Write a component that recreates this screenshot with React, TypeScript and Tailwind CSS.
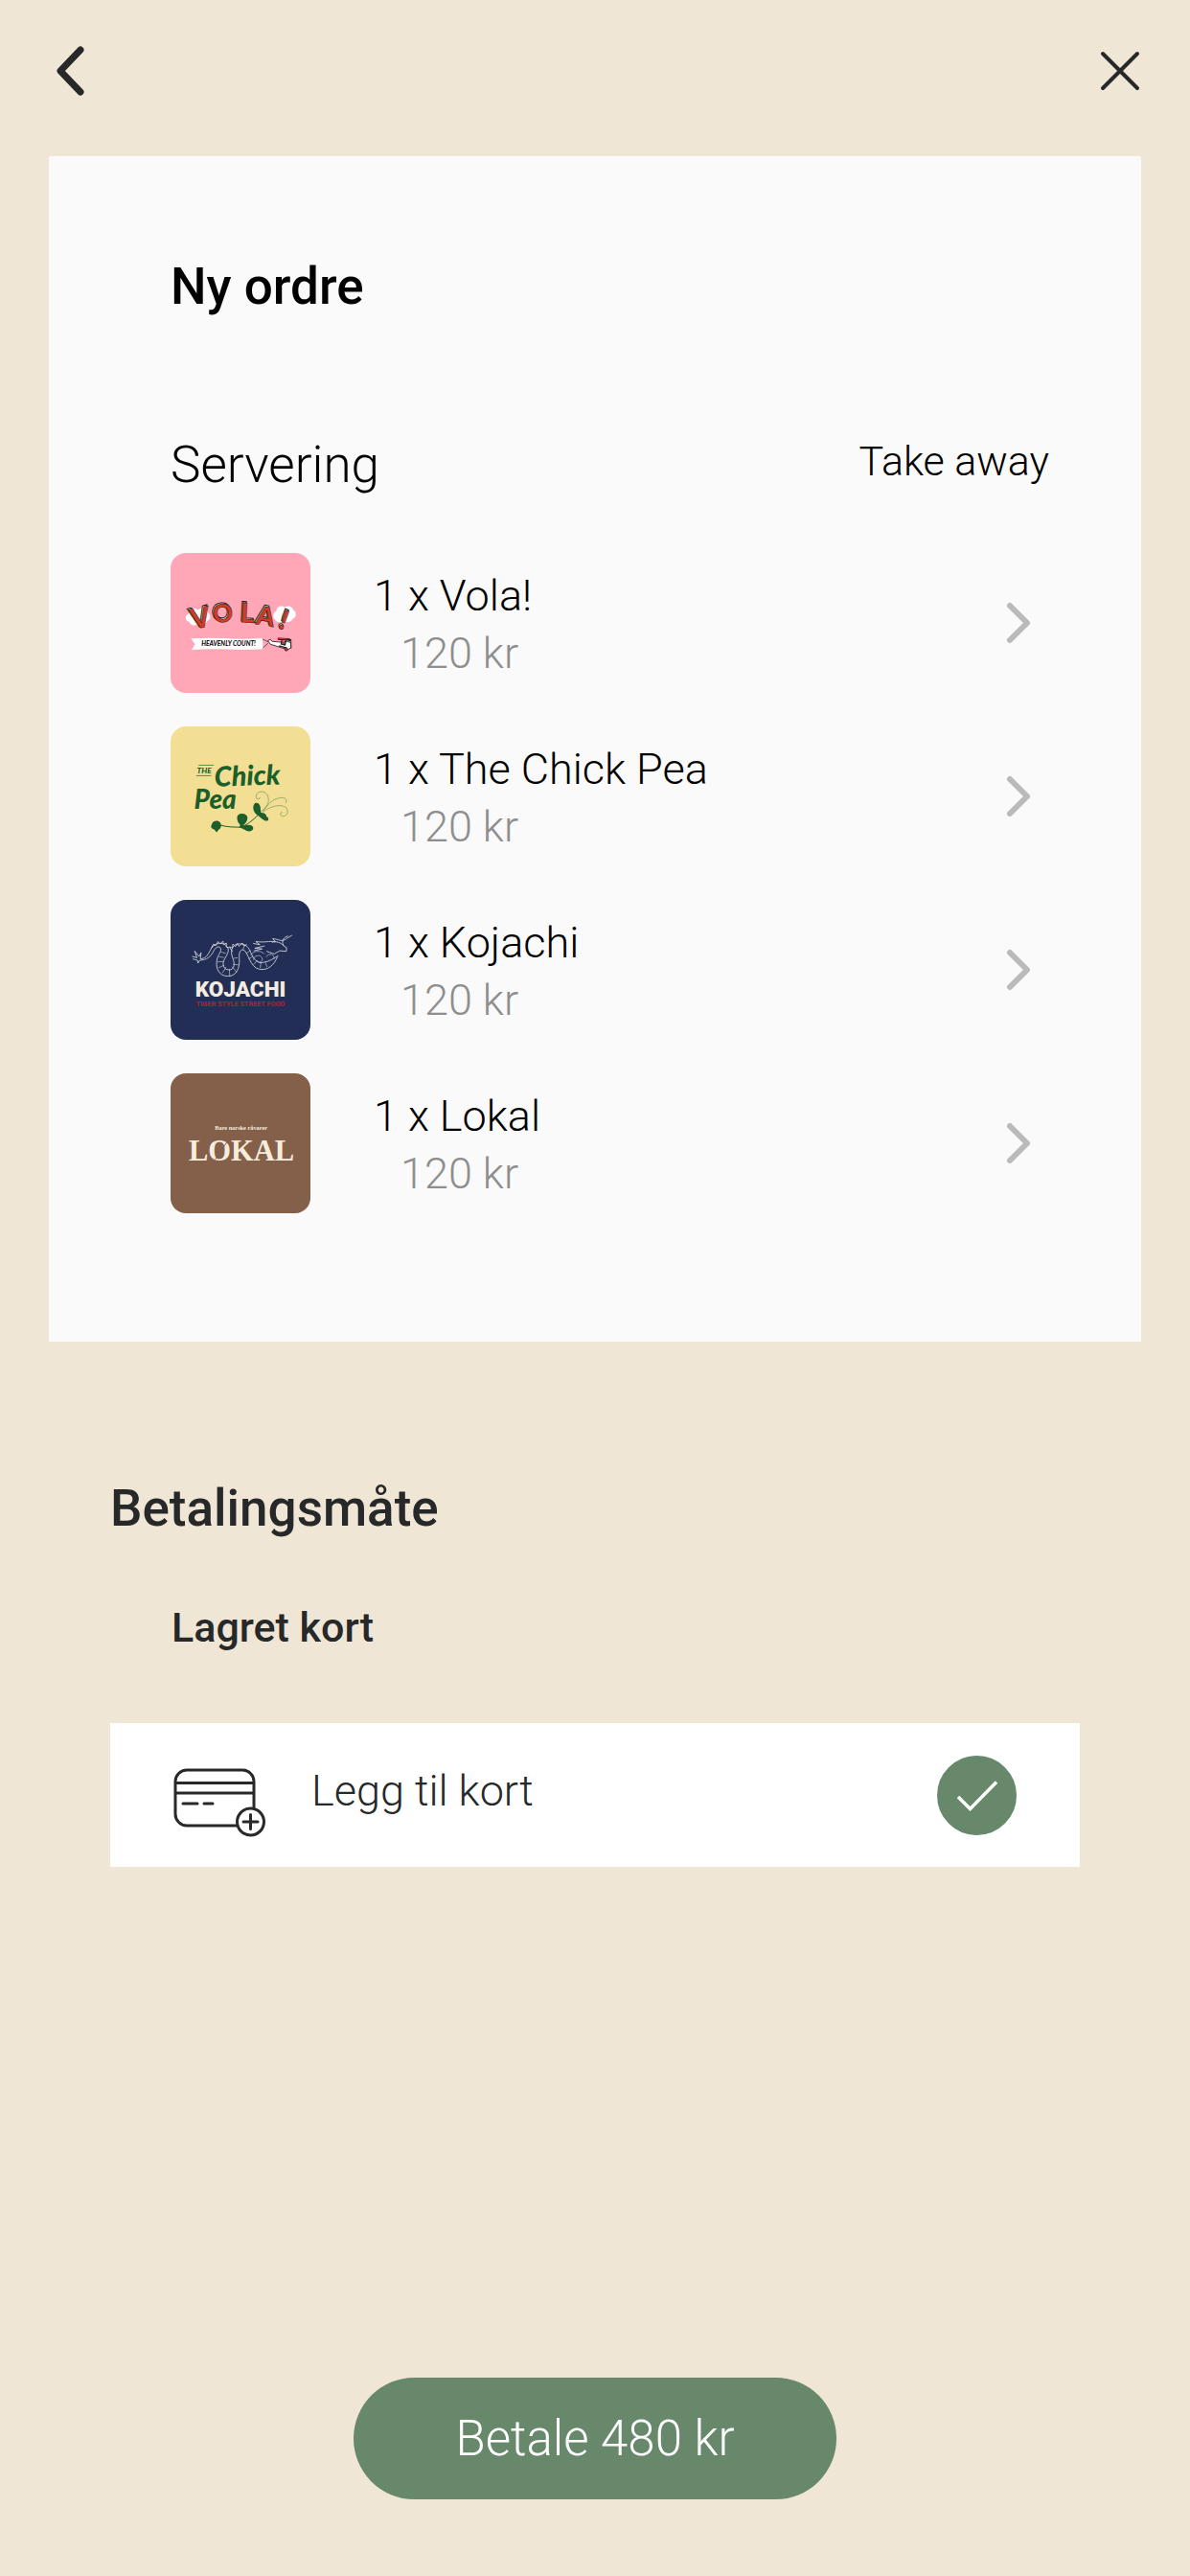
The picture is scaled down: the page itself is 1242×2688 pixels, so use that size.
import { useState } from 'react';
import type { ReactNode } from 'react';

type OrderItem = {
  id: string;
  name: string;
  count: number;
  price: number;
  logo: ReactNode;
};

function VolaLogo() {
  const letters = [
    { char: 'V', x: 95, y: 260, rotate: -12, size: 88 },
    { char: 'O', x: 160, y: 239, rotate: -5, size: 78 },
    { char: 'L', x: 243, y: 237, rotate: 3, size: 86 },
    { char: 'A', x: 291, y: 242, rotate: 10, size: 82 },
    { char: '!', x: 360, y: 254, rotate: 20, size: 84 },
  ];

  return (
    <svg viewBox="25 19 440 440" className="size-full bg-[#ffa7b7]" aria-hidden="true">
      {/* clouds */}
      <path d="M84 236c-15-4-15-22-2-25 1-15 20-21 29-12 12-12 32-4 32 8 10 6 8 22-2 25-6 14-25 20-33 12-10 5-21 1-24-8z" fill="#fff" />
      <path d="M352 226c-8-8-3-22 6-24 0-14 16-20 26-12 10-8 26-2 27 9 12 4 11 24-2 27-4 10-18 13-25 6-10 8-27 6-32-6z" fill="#fff" />
      {letters.map(l => (
        <g key={l.char} transform={`translate(${l.x} ${l.y}) rotate(${l.rotate})`} fontFamily="Lato, sans-serif" fontWeight="900" fontSize={l.size}>
          <text x="-3" y="-4" fill="#e9e2e2" stroke="#1d1d1b" strokeWidth="3">{l.char}</text>
          <text fill="#d63a20" stroke="#1d1d1b" strokeWidth="1.5">{l.char}</text>
        </g>
      ))}
      {/* banner */}
      <path d="M89 288q60-3 112 0t113-1l2 34q-60 4-115 1t-110 2l11-18z" fill="#fff" />
      <text x="122" y="310" fontFamily="Lato, sans-serif" fontWeight="900" fontStyle="italic" fontSize="20" fill="#111">HEAVENLY COUNT!</text>
      {/* plane */}
      <path d="M315 290l17 9M315 318l17-15" stroke="#1d1d1b" strokeWidth="2" fill="none" />
      <path d="M331 295l8-4 5 6 33 3 14-3 12 4 1 16-10 6-20-6-35-11z" fill="#fff" stroke="#1d1d1b" strokeWidth="2.5" />
      <path d="M362 289l34 2 8 4" stroke="#1d1d1b" strokeWidth="7" fill="none" />
      <path d="M362 288l32 2" stroke="#c8322a" strokeWidth="3" fill="none" />
      <path d="M375 293l-2 12 12 3 3-14M366 311l24 7" stroke="#1d1d1b" strokeWidth="4" fill="none" />
      <circle cx="389" cy="322" r="5" fill="#c8322a" stroke="#1d1d1b" strokeWidth="2" />
      <circle cx="380" cy="302" r="4" fill="#c8322a" />
      <path d="M404 293v27" stroke="#1d1d1b" strokeWidth="2" />
    </svg>
  );
}

function ChickPeaLogo() {
  return (
    <svg viewBox="25 24 440 440" className="size-full bg-[#f2df94]" aria-hidden="true">
      <g fill="#1c5f2b" fontFamily="Lato, sans-serif" fontStyle="italic" fontWeight="900">
        <text x="108" y="172" fontSize="25">THE</text>
        <g transform="rotate(-2 170 214)">
          <text x="164" y="213" fontSize="87">Chick</text>
        </g>
        <text x="99" y="284" fontSize="84">Pea</text>
      </g>
      <path d="M113 146h48M106 179h47" stroke="#1c5f2b" strokeWidth="2" fill="none" />
      {/* pea branch */}
      <g fill="none" stroke="#1c5f2b" strokeWidth="3" strokeLinecap="round">
        <path d="M180 334c25 8 45 6 66 7 18-6 38-22 54-38" />
        <path d="M304 296c22-15 33-30 28-50-5-22-36-22-38-3-1 12 12 12 12 5M316 290c20-30 40-42 62-42 10 2 14 8 10 16M316 292c25-18 58-26 73-12 10 14 0 29-13 26-8-3-6-12 0-12" strokeWidth="1.2" />
      </g>
      <g fill="#1c5f2b">
        <path d="M156 329c3-8 18-12 25-3 5 8 4 18-4 22l-7 9-8-9c-8-1-11-9-9-12z" />
        <path d="M244 334c-9-8-13-24-6-32 10-8 28-3 29 9 0 11-7 20-15 25 14-3 30-4 33 6 1 10-11 15-22 10-7-4-12-8-22-10z" />
        <path d="M297 302c-13-10-16-28-6-37 11-4 18 8 17 20l1 10c11 0 17 4 18 12 7 3 8 12 2 14-10 2-19-10-32-19z" />
      </g>
    </svg>
  );
}

function KojachiLogo() {
  return (
    <svg viewBox="25 28 440 440" className="size-full bg-[#222e55]" aria-hidden="true">
      {/* dragon */}
      <g fill="none" stroke="#d9dbe0" strokeWidth="2.5" strokeLinecap="round" strokeLinejoin="round">
        <path d="M94 206l14 4-7-21 14 17 6-12-2 20c20-2 25-17 34-33 11-19 38-22 50-6 9 13-1 26-8 39-10 17-2 34 14 34 19 0 18-22 11-38-7-19-3-40 15-43 24-4 36 9 42 26 8 20 21 36 38 32 22-3 34-13 48-21" />
        <path d="M96 214l14 4 1 9 6-9c22-1 35-12 43-28 5-12 15-18 21-12 7 10-5 20-9 34-8 29 5 56 33 56 29 1 39-30 36-57-1-20 4-26 12-26 17 4 20 55 51 61 28 5 46-13 57-38" />
        <path d="M153 180l7-13 7 5 7-13 7 7 9-8 2 10 9-4-1 12 8 2M219 190l-9-14 10 3 1-12 8 8 6-10 5 9 11-10 5 9 8-4" />
        <path d="M286 165l20 4-13-10c28 4 42-2 62 0l-9-9c17 0 29 14 46-2l14-8M345 161c12-3 26 0 35 11l10 6-1 12-21-2-17 10-23-8M380 170c-7-13 0-24 13-28M288 188l25-6-23-2 30-7" />
        <path d="M286 216c0-14 22-18 27-5 5 12-12 19-16 8M278 201c8-16 34-14 42-3M326 207c9-14 26-9 25 6M184 192l14 4M178 207l14 2M173 223l17-1M177 241l16-7M189 257l10-17M211 267l-1-21M233 255l-14-16M239 232l-16-1M235 210l-12 2M253 184l5-13M263 196l13-8M272 213l12-7M287 231l8-10M307 241l2-14M328 238l-4-12" strokeWidth="1.8" />
      </g>
      <text x="245" y="332" textAnchor="middle" fontFamily="Roboto, sans-serif" fontWeight="900" fontSize="68" fill="#f4ece0">KOJACHI</text>
      <text x="245" y="363" textAnchor="middle" fontFamily="Roboto, sans-serif" fontWeight="700" fontSize="22" fill="#b02330">TIGER STYLE STREET FOOD</text>
    </svg>
  );
}

function LokalLogo() {
  return (
    <svg viewBox="25 27 440 440" className="size-full bg-[#84604a]" aria-hidden="true">
      <g fill="#f6ecdd" textAnchor="middle" fontFamily="'Liberation Serif', serif">
        <text x="247" y="206" fontSize="19" fontWeight="700">Bare norske råvarer</text>
        <text x="248" y="302" fontSize="92" fontWeight="700">LOKAL</text>
      </g>
      <path d="M166 297l38-56" stroke="#84604a" strokeWidth="3" />
    </svg>
  );
}

const items: OrderItem[] = [
  { id: 'vola', name: 'Vola!', count: 1, price: 120, logo: <VolaLogo /> },
  { id: 'chick-pea', name: 'The Chick Pea', count: 1, price: 120, logo: <ChickPeaLogo /> },
  { id: 'kojachi', name: 'Kojachi', count: 1, price: 120, logo: <KojachiLogo /> },
  { id: 'lokal', name: 'Lokal', count: 1, price: 120, logo: <LokalLogo /> },
];

export default function App() {
  const total = items.reduce((sum, item) => sum + item.count * item.price, 0);

  return (
    <div className="flex min-h-screen flex-col bg-[#f0e6d5] pb-20 font-['Roboto',sans-serif] text-[#262829]">
      <Header />
      <main className="flex flex-1 flex-col">
        <OrderCard />
        <Payment />
        <button type="button" className="mt-auto h-[127px] w-[504px] self-center rounded-full bg-[#67886b] text-[51px] leading-[60px] font-light text-white">
          Betale {total} kr
        </button>
      </main>
    </div>
  );
}

function Header() {
  return (
    <header className="mb-4 flex h-[147px] items-center justify-between pr-[50px] pl-[55px]">
      <button type="button" aria-label="Tilbake">
        <svg width="36" height="56" viewBox="0 0 36 56" fill="none" stroke="currentColor" strokeWidth="7" strokeLinecap="round" strokeLinejoin="round">
          <path d="M29 6L8 28l21 22" />
        </svg>
      </button>
      <button type="button" aria-label="Lukk">
        <svg width="46" height="46" viewBox="0 0 46 46" fill="none" stroke="currentColor" strokeWidth="4" strokeLinecap="round">
          <path d="M5 5l36 36M41 5L5 41" />
        </svg>
      </button>
    </header>
  );
}

function OrderCard() {
  return (
    <section className="mx-[51px] bg-[#fafafa] pt-[106px] pr-24 pb-[134px] pl-[127px] text-black">
      <h1 className="text-[53px] leading-[60px] font-medium">Ny ordre</h1>
      <div className="mt-[126px] flex items-start justify-between">
        <h2 className="text-[53px] leading-[60px] font-light">Servering</h2>
        <p className="text-[43px] leading-[52px] font-light">Take away</p>
      </div>
      <ul className="mt-[62px] flex flex-col gap-[35px]">
        {items.map(item => (
          <li key={item.id}>
            <button type="button" className="flex w-full items-center pr-[18px] text-left">
              <span className="size-[146px] shrink-0 overflow-hidden rounded-2xl">{item.logo}</span>
              <span className="ml-[66px] flex-1 pt-1 text-[45px] leading-[60px] font-light">
                <span className="block">
                  {item.count} x {item.name}
                </span>
                <span className="block pl-7 text-[#8e8e8e]">{item.price} kr</span>
              </span>
              <svg width="28" height="46" viewBox="0 0 28 46" fill="none" stroke="#bababa" strokeWidth="6" strokeLinecap="round" strokeLinejoin="round">
                <path d="M5 5l18 18L5 41" />
              </svg>
            </button>
          </li>
        ))}
      </ul>
    </section>
  );
}

function Payment() {
  const [selected, setSelected] = useState(true);

  return (
    <section className="mx-[115px] mt-36">
      <h2 className="text-[53px] leading-[60px] font-medium">Betalingsmåte</h2>
      <h3 className="mt-[68px] pl-16 text-[43px] leading-[52px] font-medium">Lagret kort</h3>
      <label className="mt-[74px] flex h-[150px] items-center bg-white px-[66px]">
        <CardIcon />
        <span className="ml-12 flex-1 pb-2 text-[45px] leading-[52px] font-light">Legg til kort</span>
        <span className="grid">
          <input type="checkbox" checked={selected} onChange={e => setSelected(e.target.checked)} className="peer col-start-1 row-start-1 size-[83px] appearance-none rounded-full border-2 border-[#67886b] checked:bg-[#67886b]" />
          <svg viewBox="0 0 83 83" fill="none" stroke="#fff" strokeWidth="3.5" className="pointer-events-none invisible col-start-1 row-start-1 size-[83px] peer-checked:visible">
            <path d="M22 43l12.500 12.500L62 27.500" />
          </svg>
        </span>
      </label>
    </section>
  );
}

function CardIcon() {
  return (
    <svg width="96" height="72" viewBox="0 0 96 72" fill="none" stroke="currentColor" strokeWidth="3" className="mt-4 shrink-0" aria-hidden="true">
      <path d="M66 60H14A12 12 0 0 1 2 48V14A12 12 0 0 1 14 2H72A12 12 0 0 1 84 14V43" />
      <path d="M2 15.500H84M2 26H84" />
      <path d="M10 37H25M32 37H41" strokeLinecap="round" />
      <circle cx="80.500" cy="56" r="14" />
      <path d="M73 56H88M80.500 48.500V63.500" strokeLinecap="round" />
    </svg>
  );
}
